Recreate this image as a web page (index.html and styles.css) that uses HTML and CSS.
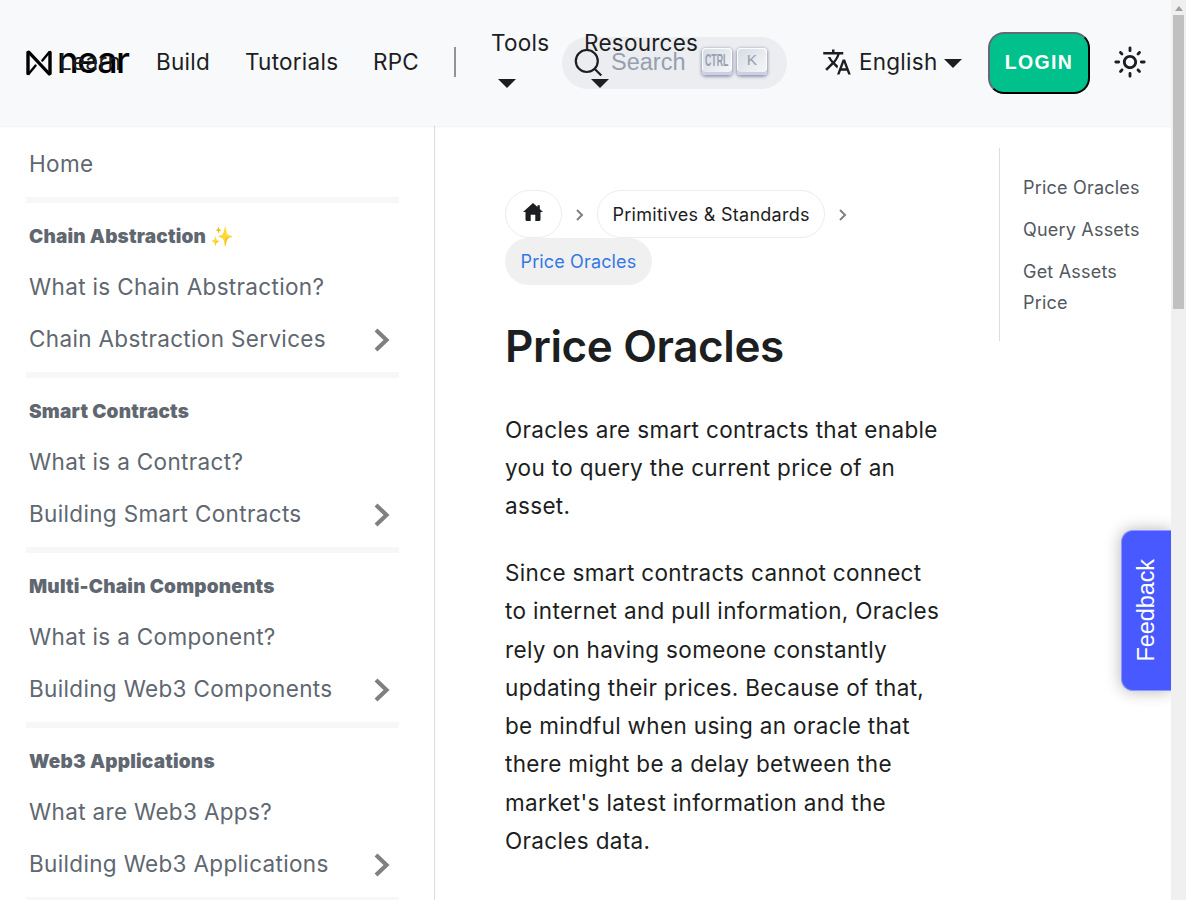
FILE: index.html
```html
<!DOCTYPE html>
<html lang="en">
<head>
<meta charset="utf-8">
<title>Price Oracles</title>
<link rel="stylesheet" href="styles.css">
</head>
<body>
<div class="page">
  <header class="navbar">
    <a class="brand">
      <svg class="brand-mark" width="26" height="26" viewBox="0 0 26 26" fill="none" stroke="#000" stroke-linecap="round"><path d="M2 2.4V23.6" stroke-width="3.4"/><path d="M24 2.4V23.6" stroke-width="3.4"/><path d="M2.8 2.2L23.2 23.8" stroke-width="3.2"/><path d="M23.2 2.2L16.4 10.6M2.8 23.8L9.6 15.6" stroke-width="2.4"/></svg>
      <span class="brand-name">near</span>
    </a>
    <nav class="nav">
      <a class="nav-learn">Learn</a>
      <a class="nav-build">Build</a>
      <a class="nav-tutorials">Tutorials</a>
      <a class="nav-rpc">RPC</a>
      <i class="divider"></i>
      <a class="drop drop-tools">Tools<i class="caret"></i></a>
      <a class="drop">Resources<i class="caret"></i></a>
    </nav>
    <div class="search">
      <svg width="29" height="29" viewBox="0 0 29 29" fill="none" stroke="#1c1e21" stroke-width="2.2"><circle cx="12.8" cy="12" r="11"/><path d="M20.5 19.8L27.3 26.5"/></svg>
      <span class="search-text">Search</span>
      <kbd class="key"><span class="ctrl">CTRL</span></kbd>
      <kbd class="key">K</kbd>
    </div>
    <a class="language">
      <svg width="30" height="30" viewBox="0 0 24 24" fill="#1c1e21"><path d="M12.87 15.07l-2.54-2.51.03-.03c1.74-1.94 2.98-4.17 3.71-6.53H17V4h-7V2H8v2H1v1.99h11.17C11.5 7.92 10.44 9.75 9 11.35 8.07 10.32 7.3 9.19 6.69 8h-2c.73 1.63 1.73 3.17 2.98 4.56l-5.09 5.02L4 19l5-5 3.11 3.11.76-2.04zM18.5 10h-2L12 22h2l1.12-3h4.75L21 22h2l-4.5-12zm-2.62 7l1.62-4.33L19.12 17h-3.24z"/></svg>
      <span>English</span><i class="caret"></i>
    </a>
    <button class="login">LOGIN</button>
    <svg class="sun" width="34" height="34" viewBox="0 0 24 24" fill="#1c1e21"><path d="M12,9c1.65,0,3,1.35,3,3s-1.35,3-3,3s-3-1.35-3-3S10.35,9,12,9 M12,7c-2.76,0-5,2.24-5,5s2.24,5,5,5s5-2.24,5-5 S14.76,7,12,7L12,7z M2,13l2,0c0.55,0,1-0.45,1-1s-0.45-1-1-1l-2,0c-0.55,0-1,0.45-1,1S1.45,13,2,13z M20,13l2,0c0.55,0,1-0.45,1-1 s-0.45-1-1-1l-2,0c-0.55,0-1,0.45-1,1S19.45,13,20,13z M11,2v2c0,0.55,0.45,1,1,1s1-0.45,1-1V2c0-0.55-0.45-1-1-1S11,1.45,11,2z M11,20v2c0,0.55,0.45,1,1,1s1-0.45,1-1v-2c0-0.55-0.45-1-1-1C11.45,19,11,19.45,11,20z M5.99,4.58c-0.39-0.39-1.03-0.39-1.41,0 c-0.39,0.39-0.39,1.03,0,1.41l1.06,1.06c0.39,0.39,1.03,0.39,1.41,0s0.39-1.03,0-1.41L5.99,4.58z M18.36,16.95 c-0.39-0.39-1.03-0.39-1.41,0c-0.39,0.39-0.39,1.03,0,1.41l1.06,1.06c0.39,0.39,1.03,0.39,1.41,0c0.39-0.39,0.39-1.03,0-1.41 L18.36,16.95z M19.42,5.99c0.39-0.39,0.39-1.03,0-1.41c-0.39-0.39-1.03-0.39-1.41,0l-1.06,1.06c-0.39,0.39-0.39,1.03,0,1.41 s1.03,0.39,1.41,0L19.42,5.99z M7.05,18.36c0.39-0.39,0.39-1.03,0-1.41c-0.39-0.39-1.03-0.39-1.41,0l-1.06,1.06 c-0.39,0.39-0.39,1.03,0,1.41s1.03,0.39,1.41,0L7.05,18.36z"/></svg>
  </header>
  <div class="body">
    <aside class="sidebar">
      <a class="item">Home</a>
      <hr>
      <h3>Chain Abstraction ✨</h3>
      <a class="item">What is Chain Abstraction?</a>
      <a class="item">Chain Abstraction Services<svg class="more" width="18" height="26" viewBox="0 0 18 26"><path d="M3 3L13.5 13L3 23"/></svg></a>
      <hr>
      <h3>Smart Contracts</h3>
      <a class="item">What is a Contract?</a>
      <a class="item">Building Smart Contracts<svg class="more" width="18" height="26" viewBox="0 0 18 26"><path d="M3 3L13.5 13L3 23"/></svg></a>
      <hr>
      <h3>Multi-Chain Components</h3>
      <a class="item">What is a Component?</a>
      <a class="item">Building Web3 Components<svg class="more" width="18" height="26" viewBox="0 0 18 26"><path d="M3 3L13.5 13L3 23"/></svg></a>
      <hr>
      <h3>Web3 Applications</h3>
      <a class="item">What are Web3 Apps?</a>
      <a class="item">Building Web3 Applications<svg class="more" width="18" height="26" viewBox="0 0 18 26"><path d="M3 3L13.5 13L3 23"/></svg></a>
      <hr>
    </aside>
    <main class="content">
      <div class="crumbs">
        <a class="crumb crumb-home"><svg width="20" height="18" viewBox="0 0 20 18"><path d="M10 0L0 9H2.5V16.5Q2.5 18 4 18H7.7V11.7H12.3V18H16Q17.5 18 17.5 16.5V9H20L16.8 6V2.2H14.5V4Z" fill="#1c1e21"/></svg></a>
        <svg class="sep" width="8" height="12" viewBox="0 0 8 12"><path d="M1 1L6 6L1 11"/></svg>
        <a class="crumb">Primitives &amp; Standards</a>
        <svg class="sep" width="8" height="12" viewBox="0 0 8 12"><path d="M1 1L6 6L1 11"/></svg>
        <a class="crumb active">Price Oracles</a>
      </div>
      <h1>Price Oracles</h1>
      <p>Oracles are smart contracts that enable<br>you to query the current price of an<br>asset.</p>
      <p>Since smart contracts cannot connect<br>to internet and pull information, Oracles<br>rely on having someone constantly<br>updating their prices. Because of that,<br>be mindful when using an oracle that<br>there might be a delay between the<br>market's latest information and the<br>Oracles data.</p>
    </main>
    <nav class="toc">
      <a>Price Oracles</a>
      <a>Query Assets</a>
      <a>Get Assets<br>Price</a>
    </nav>
  </div>
  <div class="feedback"><span>Feedback</span></div>
</div>
<div class="scrollbar"><i class="scroll-up"></i><div class="thumb"></div></div>
</body>
</html>
```

FILE: styles.css
```css
* { box-sizing: border-box; }
body { margin: 0; display: flex; width: 1186px; height: 900px; overflow: hidden; font: 22.5px/38.25px Inter, sans-serif; letter-spacing: .34px; color: #1c1e21; background: #fff; }
.page { position: relative; width: 1171px; height: 900px; overflow: hidden; }
.navbar { position: relative; z-index: 2; display: flex; align-items: center; height: 126px; padding-left: 26px; background: #f7f9fb; box-shadow: 0 1px 2px rgba(0,0,0,.06); letter-spacing: .25px; }
.brand { display: flex; align-items: center; width: 33px; height: 30px; flex: none; padding-bottom: 2px; }
.brand-mark { flex: none; margin-top: 1px; }
.brand-name { margin: -4px 0 0 5px; font-size: 36px; font-weight: 500; letter-spacing: -1.5px; color: #000; }
.nav { display: flex; align-items: center; flex: none; width: 503px; padding-bottom: 2px; position: relative; z-index: 1; white-space: nowrap; }
.nav-learn { width: 97px; }
.nav-build { width: 89px; }
.nav-tutorials { width: 128px; }
.nav-rpc { width: 81px; }
.nav a { flex: none; }
.divider { flex: none; width: 2px; height: 30px; margin-right: 35px; background: #919396; }
.drop { display: flex; flex-direction: column; gap: 17px; height: 90px; padding-top: 7px; }
.drop-tools { width: 93px; }
.caret { display: block; width: 0; height: 0; border: 9px solid transparent; border-top-color: #1c1e21; border-bottom: 0; }
.drop .caret { margin-left: 7px; }
.search { display: flex; align-items: center; flex: none; width: 225px; height: 52px; padding-left: 12px; border-radius: 26px; background: #ebedf0; }
.search-text { width: 99px; flex: none; padding: 0 0 2px 8px; color: #969faf; font-family: "Liberation Sans", sans-serif; font-size: 23.5px; letter-spacing: 0; }
.key { display: flex; flex: none; align-items: center; justify-content: center; width: 30px; height: 27px; margin: 0 5px 4px 0; padding-bottom: 3px; border-radius: 4px; font: 15.5px/20px "Liberation Sans", sans-serif; letter-spacing: 0; color: #969faf; background: linear-gradient(-45deg, #f8f8f8, #d5dbe4); box-shadow: inset 0 -3px #cdcde6, inset 0 0 1px 1px #fff, 0 1px 3px 1px rgba(30,35,90,.4); }
.ctrl { transform: scale(.57, 1.1); font-weight: bold; }
.language { display: flex; align-items: center; flex: none; width: 166px; margin-left: 35px; }
.language svg { margin-top: -3px; }
.language span { margin: -2px 7px 0 7px; }
.login { flex: none; width: 102px; height: 62px; padding: 0 0 2px; border: 2px outset #1c1e21; border-radius: 16px; background: #00c08b; color: #fff; font: bold 19.5px "Liberation Sans", sans-serif; letter-spacing: 1.35px; }
.sun { flex: none; margin: -2px 0 0 23px; }
.body { display: flex; align-items: flex-start; height: 774px; }
.sidebar { flex: none; width: 435px; height: 774px; padding: 12px 36px 0 26px; border-right: 1px solid #dadde1; overflow: hidden; color: #606770; }
.item { display: flex; align-items: center; justify-content: space-between; height: 52px; padding: 0 7px 0 3px; white-space: nowrap; }
.sidebar hr { height: 6px; margin: 7px 0 0; border: 0; background: #f7f7f7; width: 373px; }
.sidebar h3 { height: 58px; margin: 0; padding: 9px 3px 0; font-size: 19px; font-weight: 900; line-height: 50px; letter-spacing: .2px; }
.more { fill: none; stroke: #808080; stroke-width: 4.2; margin-top: 1px; }
.content { flex: none; width: 564px; padding: 64px 30px 0 70px; }
.crumbs { display: flex; flex-wrap: wrap; align-items: center; width: 450px; font-size: 18px; }
.crumb { height: 48px; padding: 0 14.5px; border: 1px solid #ebedf0; border-radius: 24px; line-height: 47px; letter-spacing: .28px; }
.crumb-home { display: flex; align-items: center; width: 57px; padding: 0 17px 4px; }
.sep { margin: 1px 13.5px 0; fill: none; stroke: #808080; stroke-width: 2; }
.active { height: 47px; padding: 0 15.5px; border: 0; color: #3578e5; background: #f0f0f0; letter-spacing: .14px; }
h1 { margin: 33px 0 36.7px; font-size: 44px; font-weight: 600; line-height: 56px; letter-spacing: -.4px; }
p { margin: 0 0 28.75px; white-space: nowrap; }
.toc { flex: none; width: 160px; height: 193px; margin-top: 22px; padding: 24px 0 0 23px; border-left: 1px solid #dadde1; color: #525860; font-size: 18px; line-height: 31px; letter-spacing: .2px; display: flex; flex-direction: column; gap: 11px; }
.feedback { position: absolute; z-index: 3; right: 0; top: 530px; display: flex; align-items: center; justify-content: center; width: 50px; height: 161px; padding-right: 1px; border: 1px solid #8d97ff; border-right: 0; border-radius: 12px 0 0 12px; background: #485aff; box-shadow: 0 0 16px rgba(0,0,0,.3); color: #fff; font: 23.5px "Liberation Sans", sans-serif; letter-spacing: -.1px; }
.feedback span { writing-mode: vertical-rl; transform: rotate(180deg); }
.scrollbar { flex: none; width: 15px; height: 900px; background: #f0f0f0; }
.scroll-up { display: block; width: 0; height: 0; margin: 6px 0 4px 3.5px; border: 4px solid transparent; border-bottom: 5px solid #a0a0a0; border-top: 0; }
.thumb { width: 11px; height: 294px; margin-left: 2px; background: #c0c0c0; }
```
